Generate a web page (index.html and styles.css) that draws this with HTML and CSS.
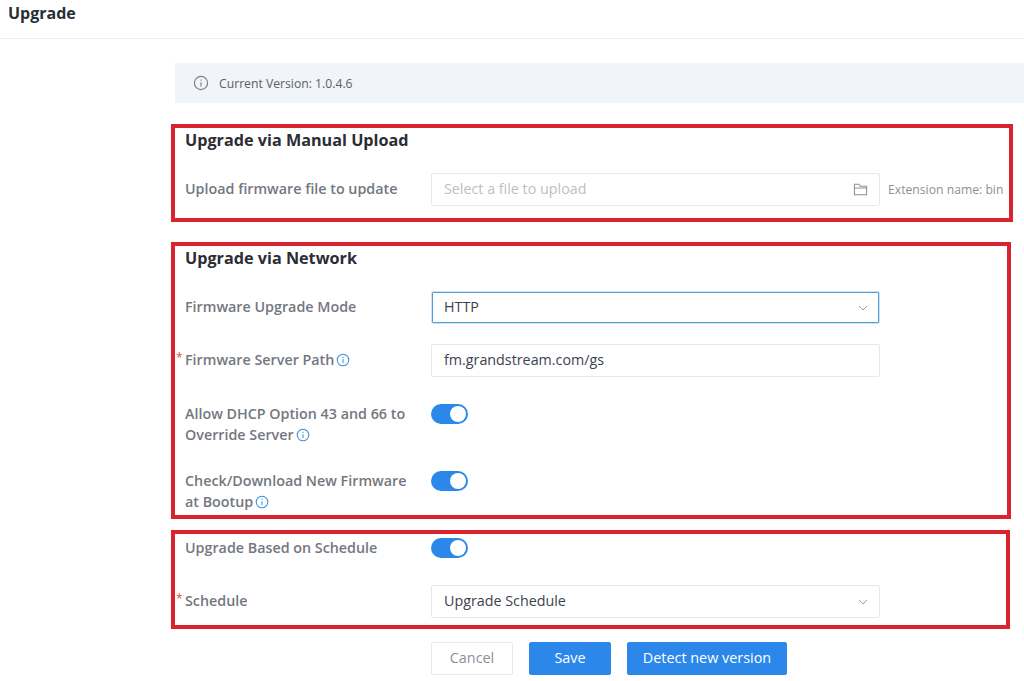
FILE: index.html
```html
<!DOCTYPE html>
<html lang="en">
<head>
    <meta charset="UTF-8">
    <title>Upgrade</title>
    <link rel="stylesheet" href="styles.css">
</head>
<body>
    <div class="topbar">Upgrade</div>

    <div class="content">
        <div class="notice">
            <svg class="notice-icon" viewBox="0 0 16 16"><circle cx="8" cy="8" r="6.6"/><path d="M8 7.2v4.2M8 4.4v1.4"/></svg>
            <span>Current Version: 1.0.4.6</span>
        </div>

        <div class="box box-manual">
            <h2>Upgrade via Manual Upload</h2>
            <div class="row row-upload">
                <label>Upload firmware file to update</label>
                <div class="field placeholder">
                    <span>Select a file to upload</span>
                    <svg class="folder" viewBox="0 0 16 16"><path d="M1.5 13.5v-11h5l1.2 2h6.8v9zM1.5 6.5h13"/></svg>
                </div>
                <span class="hint">Extension name: bin</span>
            </div>
        </div>

        <div class="box box-network">
            <h2>Upgrade via Network</h2>
            <div class="row row-mode">
                <label>Firmware Upgrade Mode</label>
                <div class="field field-active">
                    <span>HTTP</span>
                    <svg class="arrow" viewBox="0 0 10 6"><path d="M1 1l4 4 4-4"/></svg>
                </div>
            </div>
            <div class="row row-path">
                <label class="required">Firmware Server Path<svg class="tip" viewBox="0 0 16 16"><circle cx="8" cy="8" r="6.6"/><path d="M8 7.2v4.2M8 4.4v1.4"/></svg></label>
                <div class="field"><span>fm.grandstream.com/gs</span></div>
            </div>
            <div class="row row-switch row-dhcp">
                <label>Allow DHCP Option 43 and 66 to Override Server<svg class="tip" viewBox="0 0 16 16"><circle cx="8" cy="8" r="6.6"/><path d="M8 7.2v4.2M8 4.4v1.4"/></svg></label>
                <div class="switch"></div>
            </div>
            <div class="row row-switch row-boot">
                <label>Check/Download New Firmware at Bootup<svg class="tip" viewBox="0 0 16 16"><circle cx="8" cy="8" r="6.6"/><path d="M8 7.2v4.2M8 4.4v1.4"/></svg></label>
                <div class="switch"></div>
            </div>
        </div>

        <div class="box box-schedule">
            <div class="row row-switch row-based">
                <label>Upgrade Based on Schedule</label>
                <div class="switch"></div>
            </div>
            <div class="row row-schedule">
                <label class="required">Schedule</label>
                <div class="field">
                    <span>Upgrade Schedule</span>
                    <svg class="arrow" viewBox="0 0 10 6"><path d="M1 1l4 4 4-4"/></svg>
                </div>
            </div>
        </div>

        <div class="actions">
            <button class="btn btn-cancel">Cancel</button>
            <button class="btn btn-save">Save</button>
            <button class="btn btn-detect">Detect new version</button>
        </div>
    </div>
</body>
</html>
```

FILE: styles.css
```css
* {
    box-sizing: border-box;
}
html, body {
    margin: 0;
    padding: 0;
    height: 681px;
    overflow: hidden;
    background: #fff;
    font-family: "Open Sans", "Noto Sans", sans-serif;
    color: #3c4250;
}

.topbar {
    height: 39px;
    padding: 2px 0 0 8px;
    font-size: 16px;
    line-height: 22px;
    font-weight: 700;
    color: #2a2d33;
    border-bottom: 1px solid #eff0f2;
}

.content {
    padding: 24px 0 0 171px;
}

.notice {
    display: flex;
    align-items: center;
    height: 40px;
    margin-left: 4px;
    padding-left: 18px;
    background: #f1f4f8;
    font-size: 12.2px;
    color: #5a606c;
}
.notice-icon {
    width: 16px;
    height: 16px;
    margin-right: 10px;
    fill: none;
    stroke: #7c828d;
    stroke-width: 1.2;
}

.box {
    border: 4px solid #d9232e;
    padding-left: 10px;
}
.box-manual {
    width: 842px;
    height: 98px;
    margin-top: 21px;
}
.box-network {
    width: 840px;
    height: 277px;
    margin-top: 20px;
}
.box-schedule {
    width: 839px;
    height: 99px;
    margin-top: 11px;
}

h2 {
    margin: 0;
    padding-bottom: 1px;
    font-size: 16.2px;
    line-height: 24px;
    font-weight: 700;
    color: #2a2d33;
}

.row {
    display: flex;
    align-items: center;
}
.row label {
    position: relative;
    flex: none;
    width: 246px;
    padding-right: 20px;
    padding-bottom: 2px;
    font-size: 14.3px;
    line-height: 21px;
    font-weight: 600;
    color: #73777f;
}
.required:before {
    content: "*";
    position: absolute;
    left: -9px;
    top: -2px;
    font-size: 12px;
    font-weight: 400;
    color: #d9534a;
}
.tip {
    width: 14px;
    height: 14px;
    margin-left: 2px;
    vertical-align: -2px;
    fill: none;
    stroke: #3f8fd0;
    stroke-width: 1.2;
}

.field {
    display: flex;
    align-items: center;
    justify-content: space-between;
    width: 449px;
    height: 33px;
    padding: 0 11px 2px 12px;
    border: 1px solid #e6e8eb;
    border-radius: 2px;
    font-size: 14.3px;
    color: #3c4250;
}
.field-active {
    border-color: #cfe3f2;
    box-shadow: inset 0 0 0 1px #4f9fdc;
}
.field.placeholder {
    color: #bcbfc5;
}
.arrow {
    width: 10px;
    height: 6px;
    margin-top: 2px;
    fill: none;
    stroke: #9a9ea6;
    stroke-width: 1;
}
.folder {
    width: 15px;
    height: 15px;
    margin-top: 2px;
    fill: none;
    stroke: #8b8f97;
    stroke-width: 1.1;
}
.hint {
    margin-left: 8px;
    font-size: 12.2px;
    color: #8d9098;
    white-space: nowrap;
}

.switch {
    position: relative;
    flex: none;
    width: 37px;
    height: 20px;
    border-radius: 10px;
    background: #2b88ea;
}
.switch:after {
    content: "";
    position: absolute;
    top: 2px;
    right: 2px;
    width: 16px;
    height: 16px;
    border-radius: 50%;
    background: #fff;
}

.row-upload {
    margin-top: 20px;
}
.row-mode {
    margin-top: 20px;
}
.row-path {
    margin-top: 20px;
}
.row-switch {
    align-items: flex-start;
}
.row-dhcp {
    margin-top: 27px;
}
.row-boot {
    margin-top: 24px;
}
.row-dhcp label, .row-boot label {
    margin-top: -1px;
}
.row-based {
    margin-top: 4px;
}
.row-based label {
    margin-top: -1px;
}
.row-schedule {
    margin-top: 25px;
}

.actions {
    display: flex;
    gap: 16px;
    margin: 13px 0 0 260px;
}
.btn {
    height: 33px;
    padding: 0 0 2px;
    border: 1px solid #2b88ea;
    border-radius: 2px;
    background: #2b88ea;
    font-family: inherit;
    font-size: 14.4px;
    color: #fff;
}
.btn-cancel {
    width: 82px;
    background: #fff;
    border-color: #e6e8eb;
    color: #8d9098;
}
.btn-save {
    width: 82px;
}
.btn-detect {
    width: 160px;
}
```
